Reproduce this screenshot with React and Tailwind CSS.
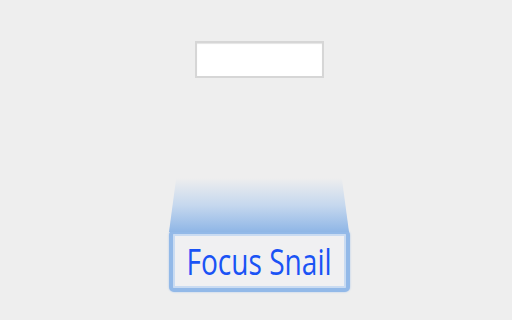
export default function App() {
  return (
    <div className="w-[512px] h-[320px] bg-[#eeeeee] flex flex-col items-center overflow-hidden">
      {/* text input */}
      <div className="mt-[41px] ml-[6px] w-[129px] h-[37px] bg-white border-2 border-[#d6d6d6] shadow-[inset_0_1px_1px_#e4e4e4]" />

      {/* snail trail */}
      <div className="mt-[100px] ml-[6px] w-[180px] h-[54px] bg-gradient-to-b from-[#eeeeee00] via-[#c6d8ee] to-[#8fb6e6] [clip-path:polygon(4%_0,96%_0,100%_100%,0_100%)]" />

      {/* focused element */}
      <div className="-mt-[2px] ml-[6px] w-[181px] h-[62px] rounded-[5px] border-[4px] border-[#93b9e8] bg-[#f0f0f2] shadow-[inset_0_0_0_2px_#c9dbf2,0_0_2px_#a8c6ec] flex items-center justify-center">
        <span
          className="inline-block mt-[2px] text-[#1a53f5] text-[36px] leading-none scale-x-[0.78] whitespace-nowrap"
          style={{ fontFamily: '"Open Sans", "Liberation Sans", sans-serif' }}
        >
          Focus Snail
        </span>
      </div>
    </div>
  );
}
